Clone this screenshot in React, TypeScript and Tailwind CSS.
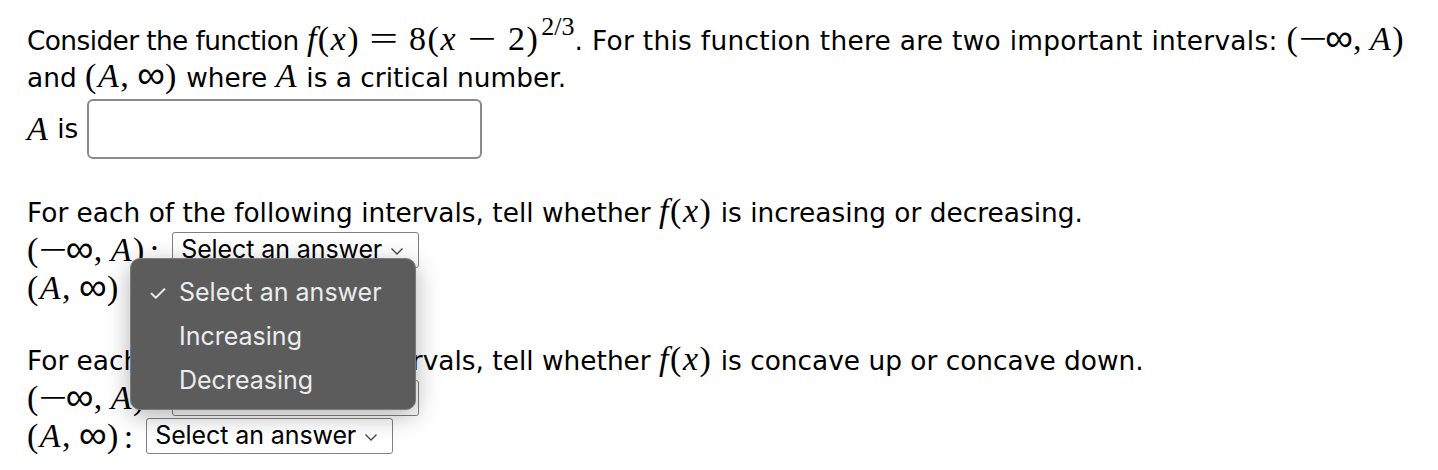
import React from "react";

const M = ({ children }: { children: React.ReactNode }) => (
  <span className="font-['Liberation_Serif',serif] text-[34px] leading-[28px] tracking-[1.5px] whitespace-nowrap">{children}</span>
);
const I = ({ children }: { children: React.ReactNode }) => <i className="italic">{children}</i>;
const Op = ({ children, w = "w-[28px]" }: { children: React.ReactNode; w?: string }) => (
  <span className={`inline-block ${w} text-center tracking-[0px]`}>
    <span className="inline-block scale-x-[1.5]">{children}</span>
  </span>
);
const Inf = () => (
  <span className="font-['DejaVu_Sans',sans-serif] font-extralight text-[39px] leading-[20px] tracking-[0px] relative top-[1px]">∞</span>
);

const NegInf = () => (
  <M>
    (<Op w="w-[26px]">−</Op>
    <Inf />,<span className="ml-[7px]"><I>A</I></span>)
  </M>
);
const PosInf = () => (
  <M>
    (<I>A</I>,<span className="ml-[7px]"><Inf /></span>)
  </M>
);
const Fx = () => (
  <M>
    <I>f</I>(<I>x</I>)
  </M>
);

const Chevron = () => (
  <svg width="14" height="9" viewBox="0 0 14 9" className="ml-[8px] mt-[3px]">
    <path d="M1.5 1.5 L7 7 L12.5 1.5" fill="none" stroke="#444" strokeWidth="1.3" />
  </svg>
);

const Select = () => (
  <span className="inline-flex items-center w-[247px] h-[36px] border border-[#808080] rounded-[3px] bg-white pl-[8px] font-['Inter','Liberation_Sans',sans-serif] text-[25px] tracking-[-0.1px] text-black">
    Select an answer
    <Chevron />
  </span>
);

const Colon = () => <span className="font-['Liberation_Serif',serif] text-[34px] ml-[4px] mr-[13px]">:</span>;

export default function App() {
  return (
    <div className="relative w-[1438px] h-[470px] bg-white text-black font-['DejaVu_Sans',sans-serif] text-[26.4px]">
      <div className="pl-[27px] pt-[22px]">
        <div className="leading-[37px] whitespace-nowrap">
          <span className="tracking-[-0.6px]">Consider the function</span>{" "}
          <span className="tracking-[2.5px]">
            <M>
              <I>f</I>(<I>x</I>)<span className="ml-[7px] mr-[10px]"><Op w="w-[32px]">=</Op></span>8(<I>x</I>
              <span className="ml-[11px] mr-[12px]"><Op>−</Op></span>2)
              <span className="inline-block text-[26px] leading-none relative -top-[15px] ml-[2px] tracking-[0px]">2/3</span>
            </M>
          </span>
          <span className="tracking-[0.3px]">. For this function there are two important intervals: </span>
          <NegInf />
          <br />
          and <PosInf /> where <M><I>A</I></M> is a critical number.
        </div>
        <div className="flex items-center h-[60px] mt-[3px]">
          <M><I>A</I></M>
          <span className="ml-[8px]">is</span>
          <span className="ml-[9px] w-[395px] h-[60px] border-2 border-[#8a8a8a] rounded-[6px] bg-white" />
        </div>
        <div className="mt-[35px] leading-[37px] whitespace-nowrap">
          For each of the following intervals, tell whether <Fx /> is increasing or decreasing.
        </div>
        <div className="flex items-center h-[38px]">
          <NegInf />
          <Colon />
          <Select />
        </div>
        <div className="flex items-center h-[38px]">
          <PosInf />
        </div>
        <div className="mt-[35px] leading-[37px] whitespace-nowrap">
          For each of the following intervals, tell whether <Fx /> is concave up or concave down.
        </div>
        <div className="flex items-center h-[38px]">
          <NegInf />
          <Colon />
          <Select />
        </div>
        <div className="flex items-center h-[38px]">
          <PosInf />
          <Colon />
          <Select />
        </div>
      </div>

      <div className="absolute left-[130px] top-[258px] w-[286px] h-[152px] rounded-[10px] bg-[#5c5c5c] border border-[#7d7d7d] shadow-[0_6px_24px_rgba(0,0,0,0.3)] font-['Inter','Liberation_Sans',sans-serif] text-[25px] tracking-[0px] text-[#ececec] pt-[12px]">
        <div className="flex items-center h-[44px]">
          <span className="w-[48px] pl-[17px] text-[22px]">✓</span>
          <span>Select an answer</span>
        </div>
        <div className="flex items-center h-[44px] pl-[48px]">Increasing</div>
        <div className="flex items-center h-[44px] pl-[48px]">Decreasing</div>
      </div>
    </div>
  );
}
